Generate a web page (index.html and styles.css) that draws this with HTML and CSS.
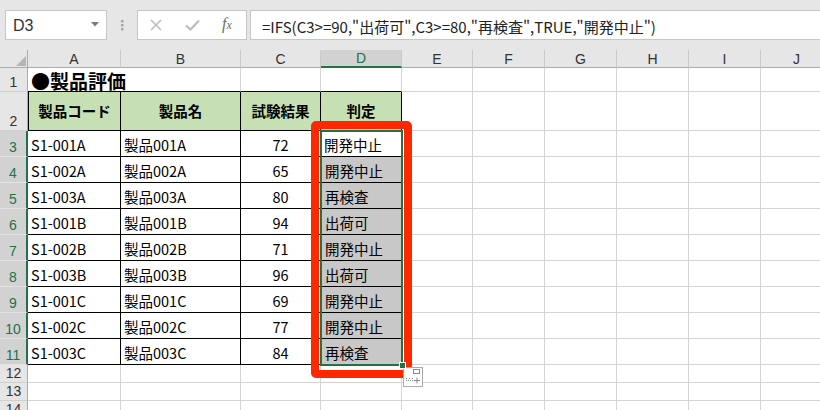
FILE: index.html
```html
<!DOCTYPE html>
<html lang="ja">
<head>
    <meta charset="utf-8">
    <title>製品評価 - IFS</title>
    <link rel="stylesheet" href="styles.css">
</head>
<body>

<div class="formula_bar">
    <div class="name_box">
        <span class="name_text">D3</span>
        <svg class="caret" width="8" height="5" viewBox="0 0 8 5"><path d="M0 0H8L4 4.5Z" fill="#7a7a7a"/></svg>
    </div>
    <svg class="grip" width="3" height="11" viewBox="0 0 3 11">
        <rect x="0" y="0" width="2.5" height="2.5" fill="#a6a6a6"/>
        <rect x="0" y="4" width="2.5" height="2.5" fill="#a6a6a6"/>
        <rect x="0" y="8" width="2.5" height="2.5" fill="#a6a6a6"/>
    </svg>
    <div class="fx_box">
        <svg class="ico_cancel" width="12" height="12" viewBox="0 0 12 12"><path d="M1 1L11 11M11 1L1 11" stroke="#bdbdbd" stroke-width="1.6" fill="none"/></svg>
        <svg class="ico_enter" width="15" height="12" viewBox="0 0 15 12"><path d="M1 6.5L5.5 10.5L14 1.5" stroke="#bdbdbd" stroke-width="2.2" fill="none"/></svg>
        <span class="fx">f<span class="fx_x">x</span></span>
    </div>
    <div class="formula_input">=IFS(C3&gt;=90,"出荷可",C3&gt;=80,"再検査",TRUE,"開発中止")</div>
</div>

<div class="sheet">
    <div class="grid">
        <!-- 列見出し -->
        <div class="corner"><svg width="28" height="18" viewBox="0 0 28 18"><path d="M26 6V16H16Z" fill="#b5b5b5"/></svg></div>
        <div class="ch">A</div>
        <div class="ch">B</div>
        <div class="ch">C</div>
        <div class="ch on">D</div>
        <div class="ch">E</div>
        <div class="ch">F</div>
        <div class="ch">G</div>
        <div class="ch">H</div>
        <div class="ch">I</div>
        <div class="ch">J</div>

        <!-- 1 -->
        <div class="rh">1</div>
        <div class="c title tb">●製品評価</div>
        <div class="c tb"></div>
        <div class="c tb"></div>
        <div class="c"></div><div class="c"></div><div class="c"></div><div class="c"></div><div class="c"></div><div class="c"></div>

        <!-- 2 -->
        <div class="rh">2</div>
        <div class="c th tl">製品コード</div>
        <div class="c th">製品名</div>
        <div class="c th">試験結果</div>
        <div class="c th">判定</div>
        <div class="c"></div><div class="c"></div><div class="c"></div><div class="c"></div><div class="c"></div><div class="c"></div>

        <!-- 3 -->
        <div class="rh on">3</div>
        <div class="c t">S1-001A</div>
        <div class="c t">製品001A</div>
        <div class="c t mid">72</div>
        <div class="c t">開発中止</div>
        <div class="c"></div><div class="c"></div><div class="c"></div><div class="c"></div><div class="c"></div><div class="c"></div>

        <!-- 4 -->
        <div class="rh on">4</div>
        <div class="c t">S1-002A</div>
        <div class="c t">製品002A</div>
        <div class="c t mid">65</div>
        <div class="c t sel">開発中止</div>
        <div class="c"></div><div class="c"></div><div class="c"></div><div class="c"></div><div class="c"></div><div class="c"></div>

        <!-- 5 -->
        <div class="rh on">5</div>
        <div class="c t">S1-003A</div>
        <div class="c t">製品003A</div>
        <div class="c t mid">80</div>
        <div class="c t sel">再検査</div>
        <div class="c"></div><div class="c"></div><div class="c"></div><div class="c"></div><div class="c"></div><div class="c"></div>

        <!-- 6 -->
        <div class="rh on">6</div>
        <div class="c t">S1-001B</div>
        <div class="c t">製品001B</div>
        <div class="c t mid">94</div>
        <div class="c t sel">出荷可</div>
        <div class="c"></div><div class="c"></div><div class="c"></div><div class="c"></div><div class="c"></div><div class="c"></div>

        <!-- 7 -->
        <div class="rh on">7</div>
        <div class="c t">S1-002B</div>
        <div class="c t">製品002B</div>
        <div class="c t mid">71</div>
        <div class="c t sel">開発中止</div>
        <div class="c"></div><div class="c"></div><div class="c"></div><div class="c"></div><div class="c"></div><div class="c"></div>

        <!-- 8 -->
        <div class="rh on">8</div>
        <div class="c t">S1-003B</div>
        <div class="c t">製品003B</div>
        <div class="c t mid">96</div>
        <div class="c t sel">出荷可</div>
        <div class="c"></div><div class="c"></div><div class="c"></div><div class="c"></div><div class="c"></div><div class="c"></div>

        <!-- 9 -->
        <div class="rh on">9</div>
        <div class="c t">S1-001C</div>
        <div class="c t">製品001C</div>
        <div class="c t mid">69</div>
        <div class="c t sel">開発中止</div>
        <div class="c"></div><div class="c"></div><div class="c"></div><div class="c"></div><div class="c"></div><div class="c"></div>

        <!-- 10 -->
        <div class="rh on">10</div>
        <div class="c t">S1-002C</div>
        <div class="c t">製品002C</div>
        <div class="c t mid">77</div>
        <div class="c t sel">開発中止</div>
        <div class="c"></div><div class="c"></div><div class="c"></div><div class="c"></div><div class="c"></div><div class="c"></div>

        <!-- 11 -->
        <div class="rh on">11</div>
        <div class="c t">S1-003C</div>
        <div class="c t">製品003C</div>
        <div class="c t mid">84</div>
        <div class="c t sel">再検査</div>
        <div class="c"></div><div class="c"></div><div class="c"></div><div class="c"></div><div class="c"></div><div class="c"></div>

        <!-- 12 - 14 -->
        <div class="rh">12</div>
        <div class="c"></div><div class="c"></div><div class="c"></div><div class="c"></div><div class="c"></div>
        <div class="c"></div><div class="c"></div><div class="c"></div><div class="c"></div><div class="c"></div>
        <div class="rh">13</div>
        <div class="c"></div><div class="c"></div><div class="c"></div><div class="c"></div><div class="c"></div>
        <div class="c"></div><div class="c"></div><div class="c"></div><div class="c"></div><div class="c"></div>
        <div class="rh">14</div>
        <div class="c"></div><div class="c"></div><div class="c"></div><div class="c"></div><div class="c"></div>
        <div class="c"></div><div class="c"></div><div class="c"></div><div class="c"></div><div class="c"></div>
    </div>

    <!-- 選択範囲と強調枠 -->
    <div class="overlay">
        <div class="sel_box"><span class="fill_handle"></span></div>
        <div class="red_box"></div>
        <div class="quick_btn">
            <svg width="18" height="18" viewBox="0 0 18 18">
                <rect x="9.5" y="1.5" width="6" height="4" fill="none" stroke="#8a8a8a"/>
                <path d="M2 12.5H9M2 10.5H3M5 10.5H6M8 10.5H9" stroke="#8a8a8a" stroke-dasharray="1 1" fill="none"/>
                <path d="M13 9.5V15.5M10 12.5H16" stroke="#8a8a8a" fill="none"/>
            </svg>
        </div>
    </div>
</div>

</body>
</html>
```

FILE: styles.css
```css
*{
    box-sizing:border-box;
}
html,body{
    margin:0;
}
body{
    width:820px;
    height:410px;
    overflow:hidden;
    background:#fff;
    color:#000;
    font-family:"Noto Sans CJK JP","Noto Sans",sans-serif;
}

/* 数式バー */
.formula_bar{
    display:flex;
    height:50px;
    padding:10px 0 10px 5px;
    background:#e6e6e6;
}
.name_box{
    width:102px;
    display:flex;
    align-items:center;
    justify-content:space-between;
    padding:2px 7px 0 7px;
    background:#fff;
    border:1px solid #c6c6c6;
}
.name_text{
    font-family:"Liberation Sans",sans-serif;
    font-size:16px;
    color:#333;
}
.caret{
    margin-top:-3px;
}
.grip{
    align-self:center;
    margin:0 13px 0 14px;
}
.fx_box{
    width:110px;
    display:flex;
    align-items:center;
    padding:0 0 0 12px;
    background:#fff;
    border:1px solid #c6c6c6;
}
.ico_enter{
    margin-left:23px;
}
.fx{
    margin-left:22px;
    font-family:"Liberation Serif",serif;
    font-style:italic;
    font-size:16px;
    color:#6a6a6a;
    margin-top:-2px;
}
.fx_x{
    font-size:12px;
}
.formula_input{
    flex:1;
    margin-left:3px;
    margin-right:-2px;
    display:flex;
    align-items:center;
    padding:3px 0 0 11px;
    background:#fff;
    border:1px solid #c6c6c6;
    font-size:15px;
    color:#222;
    white-space:nowrap;
}

/* シート */
.sheet{
    position:relative;
}
.grid,
.overlay{
    display:grid;
    grid-template-columns:28px 93px 120px 80px 81px 71px 72px 72px 72px 72px 72px;
    grid-template-rows:18px 24px 39px repeat(9,26px) 18px 18px 18px;
}
.corner{
    background:#e6e6e6;
    border-right:1px solid #ababab;
    border-bottom:1px solid #ababab;
}
.corner svg{
    display:block;
}
.ch{
    display:flex;
    align-items:center;
    justify-content:center;
    background:#e6e6e6;
    border-right:1px solid #cacaca;
    border-bottom:1px solid #ababab;
    font-family:"Liberation Sans",sans-serif;
    font-size:14px;
    line-height:1;
    color:#333;
}
.ch.on{
    background:#d2d2d2;
    color:#217346;
    border-bottom:2px solid #217346;
}
.rh{
    display:flex;
    align-items:flex-end;
    justify-content:center;
    padding-bottom:2px;
    background:#e6e6e6;
    border-right:1px solid #ababab;
    border-bottom:1px solid #cfcfcf;
    font-family:"Liberation Sans",sans-serif;
    font-size:14px;
    line-height:1;
    color:#333;
}
.rh.on{
    background:#d2d2d2;
    color:#217346;
    border-right:2px solid #217346;
    border-bottom-color:#e2e2e2;
}
.c{
    display:flex;
    align-items:flex-end;
    padding:0 3px 4px 3px;
    border-right:1px solid #d4d4d4;
    border-bottom:1px solid #d4d4d4;
    font-size:14.5px;
    line-height:1;
    white-space:nowrap;
}
.title{
    grid-column:span 2;
    font-size:19px;
    font-weight:bold;
    padding:0 3px 1px 3px;
}
.tb{
    border-bottom-color:#000;
}
.t,
.th{
    border-right-color:#000;
    border-bottom-color:#000;
}
.tl{
    border-left:1px solid #000;
}
.th{
    align-items:center;
    justify-content:center;
    padding:1px 0 0 0;
    background:#c6e0b4;
    font-weight:bold;
}
.mid{
    justify-content:center;
}
.sel{
    background:#c8c8c8;
    border-left:1px solid #fff;
}

/* 選択範囲 */
.overlay{
    position:absolute;
    top:0;
    left:0;
    pointer-events:none;
}
.sel_box{
    grid-column:5;
    grid-row:4 / 13;
    position:relative;
    margin:-1px -1px -1px -1px;
    border:2px solid #217346;
}
.fill_handle{
    position:absolute;
    right:-5px;
    bottom:-5px;
    width:7px;
    height:7px;
    background:#217346;
    border:1px solid #fff;
}
.red_box{
    grid-column:5;
    grid-row:4 / 13;
    margin:-10px -10px -13px -10px;
    border:8px solid #ff2800;
    border-radius:5px;
}
.quick_btn{
    grid-column:6;
    grid-row:13 / 15;
    align-self:start;
    justify-self:start;
    width:20px;
    height:20px;
    margin:2px 0 0 1px;
    background:#fff;
    border:1px solid #ababab;
}
.quick_btn svg{
    display:block;
}
```
